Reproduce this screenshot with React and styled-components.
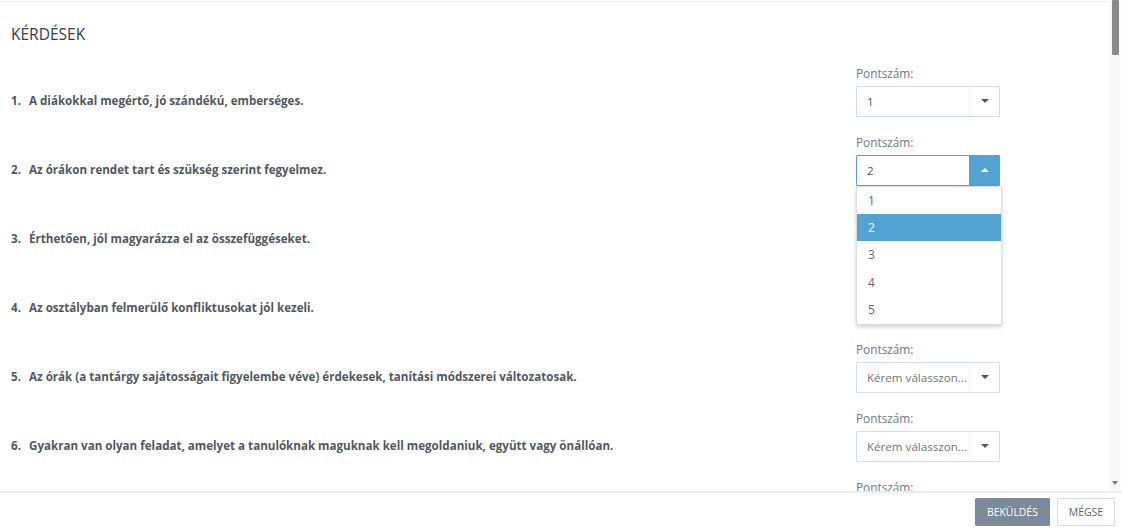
import React from 'react';
import styled, { createGlobalStyle } from 'styled-components';

const GlobalStyle = createGlobalStyle`
  html, body {
    margin: 0;
    padding: 0;
    background: #fff;
    font-family: "Open Sans", "Liberation Sans", sans-serif;
  }
  * { box-sizing: border-box; }
`;

const S = {
  Page: styled.div`
    height: 531px;
    display: flex;
    flex-direction: column;
  `,
  Body: styled.div`
    flex: 1;
    min-height: 0;
    display: flex;
  `,
  Main: styled.div`
    flex: 1;
    overflow: hidden;
    margin-top: 1px;
    border-top: 1px solid #ececec;
    padding-left: 11px;
  `,
  ScrollBar: styled.div`
    width: 12px;
    flex: none;
    display: flex;
    flex-direction: column;
    background: #f8f8f8;
    border-right: 2px solid #fdfdfd;
  `,
  Thumb: styled.div`
    height: 55px;
    margin: 0 1px 0 2px;
    background: #8a8a8a;
    border-radius: 1px;
  `,
  Track: styled.div`
    flex: 1;
  `,
  ScrollArrow: styled.div`
    height: 16px;
    display: flex;
    justify-content: center;
    padding-top: 6px;
    &::after {
      content: '';
      border-left: 3.5px solid transparent;
      border-right: 3.5px solid transparent;
      border-top: 4px solid #7d7d7d;
      height: 0;
    }
  `,
  Title: styled.h2`
    margin: 0;
    padding: 21px 0 0;
    font-size: 15.5px;
    line-height: 22px;
    font-weight: 400;
    color: #34404b;
    text-transform: uppercase;
  `,
  List: styled.div`
    margin-top: 19px;
    display: flex;
    flex-direction: column;
    gap: 16.4px;
  `,
  Row: styled.div`
    display: grid;
    grid-template-columns: 1fr 254px;
    align-items: end;
  `,
  Question: styled.div`
    display: flex;
    font-size: 11.6px;
    line-height: 18px;
    font-weight: 700;
    color: #52585e;
    padding-bottom: 7px;
  `,
  Num: styled.span`
    width: 18px;
    flex: none;
  `,
  Field: styled.div`
    position: relative;
    display: flex;
    flex-direction: column;
  `,
  Label: styled.label`
    font-size: 11.8px;
    line-height: 18.6px;
    color: #6b7886;
    margin-bottom: 3px;
  `,
  Select: styled.div`
    width: 144px;
    height: 31px;
    display: flex;
    border: 1px solid ${(p) => (p.$open ? '#52a3d2' : '#d4dde6')};
    border-radius: 1px;
    background: #fff;
  `,
  Value: styled.div`
    flex: 1;
    min-width: 0;
    padding: 0 1px 0 10px;
    font-size: 11.6px;
    line-height: 29px;
    color: ${(p) => (p.$placeholder ? '#6f757b' : '#555')};
    white-space: nowrap;
    overflow: hidden;
    text-overflow: ellipsis;
  `,
  Arrow: styled.div`
    width: 30px;
    flex: none;
    display: flex;
    align-items: center;
    justify-content: center;
    border-left: 1px solid ${(p) => (p.$open ? '#52a3d2' : '#eef1f4')};
    background: ${(p) => (p.$open ? '#52a3d2' : 'transparent')};
  `,
  Caret: styled.span`
    width: 0;
    height: 0;
    border-left: 4px solid transparent;
    border-right: 4px solid transparent;
    ${(p) =>
      p.$up
        ? 'border-bottom: 4px solid #fff;'
        : 'border-top: 4px solid #555;'}
  `,
  Menu: styled.ul`
    position: absolute;
    top: 100%;
    left: 0;
    z-index: 5;
    margin: 0;
    padding: 0;
    list-style: none;
    width: 146px;
    background: #fff;
    border: 1px solid #dcdcdc;
    box-shadow: 0 2px 4px rgba(0, 0, 0, 0.18);
  `,
  Option: styled.li`
    height: 27.4px;
    line-height: 27.4px;
    padding-left: 11px;
    font-size: 12px;
    color: ${(p) => (p.$active ? '#fff' : '#666')};
    background: ${(p) => (p.$active ? '#52a3d2' : 'transparent')};
  `,
  Footer: styled.div`
    height: 40px;
    flex: none;
    border-top: 2px solid #ececec;
    display: flex;
    justify-content: flex-end;
    align-items: center;
    gap: 7px;
    padding-right: 7px;
  `,
  Button: styled.button`
    height: 28px;
    padding: 0 11px;
    font-family: "Open Sans", "Liberation Sans", sans-serif;
    font-size: 10.4px;
    text-transform: uppercase;
    border-radius: 1px;
    border: 1px solid ${(p) => (p.$primary ? '#7b8a97' : '#d4dde6')};
    background: ${(p) => (p.$primary ? '#7b8a97' : '#fff')};
    color: ${(p) => (p.$primary ? '#fff' : '#5a6470')};
  `,
};

const questions = [
  { text: 'A diákokkal megértő, jó szándékú, emberséges.', value: '1' },
  { text: 'Az órákon rendet tart és szükség szerint fegyelmez.', value: '2', open: true },
  { text: 'Érthetően, jól magyarázza el az összefüggéseket.', value: '3' },
  { text: 'Az osztályban felmerülő konfliktusokat jól kezeli.', value: '4' },
  { text: 'Az órák (a tantárgy sajátosságait figyelembe véve) érdekesek, tanítási módszerei változatosak.' },
  { text: 'Gyakran van olyan feladat, amelyet a tanulóknak maguknak kell megoldaniuk, együtt vagy önállóan.' },
  { text: 'A számonkérés módja és gyakorisága megfelelő.' },
];

const Dropdown = ({ value, open }) => (
  <S.Field>
    <S.Label>Pontszám:</S.Label>
    <S.Select $open={open}>
      <S.Value $placeholder={!value}>{value || 'Kérem válasszon...'}</S.Value>
      <S.Arrow $open={open}>
        <S.Caret $up={open} />
      </S.Arrow>
    </S.Select>
    {open && (
      <S.Menu>
        {['1', '2', '3', '4', '5'].map((o) => (
          <S.Option key={o} $active={o === value}>
            {o}
          </S.Option>
        ))}
      </S.Menu>
    )}
  </S.Field>
);

const App = () => (
  <S.Page>
    <GlobalStyle />
    <S.Body>
      <S.Main>
        <S.Title>Kérdések</S.Title>
        <S.List>
          {questions.map((q, i) => (
            <S.Row key={i}>
              <S.Question>
                <S.Num>{i + 1}.</S.Num>
                <span>{q.text}</span>
              </S.Question>
              <Dropdown value={q.value} open={q.open} />
            </S.Row>
          ))}
        </S.List>
      </S.Main>
      <S.ScrollBar>
        <S.Thumb />
        <S.Track />
        <S.ScrollArrow />
      </S.ScrollBar>
    </S.Body>
    <S.Footer>
      <S.Button $primary>Beküldés</S.Button>
      <S.Button>Mégse</S.Button>
    </S.Footer>
  </S.Page>
);

export default App;
